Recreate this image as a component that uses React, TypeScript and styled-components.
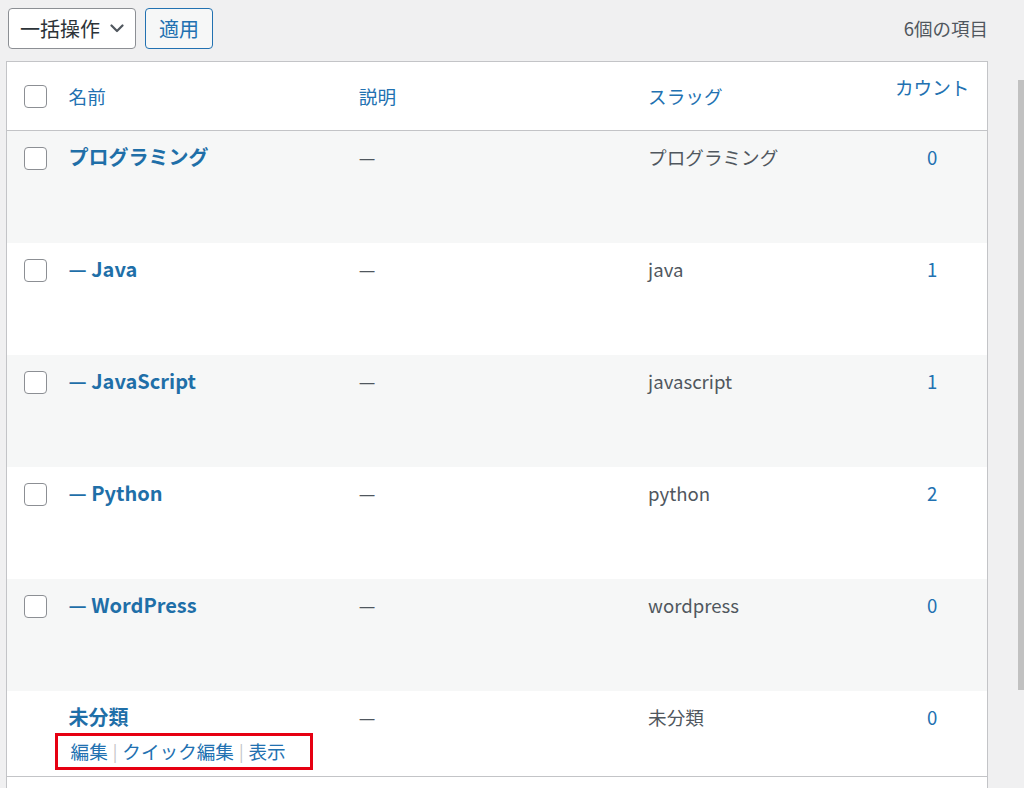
import React from 'react';
import styled, { createGlobalStyle } from 'styled-components';

const GlobalStyle = createGlobalStyle`
  html, body {
    margin: 0;
    padding: 0;
    background: #f0f0f1;
    overflow: hidden;
  }
  body {
    font-family: "Noto Sans CJK JP", "Open Sans", sans-serif;
    color: #3c434a;
  }
`;

const Page = styled.div`
  width: 1024px;
  height: 788px;
  overflow: hidden;
  box-sizing: border-box;
  padding: 8px 36px 0 6px;
`;

const TopNav = styled.div`
  display: flex;
  align-items: center;
  height: 41px;
  padding-left: 2px;
  margin-bottom: 12px;
`;

const BulkSelect = styled.div`
  box-sizing: border-box;
  width: 128px;
  height: 41px;
  border: 1px solid #8c8f94;
  border-radius: 4px;
  background: #fff;
  display: flex;
  align-items: center;
  justify-content: space-between;
  padding: 0 11px 0 11px;
  font-size: 20px;
  line-height: 1;
  color: #2c3338;
`;

const ApplyButton = styled.button`
  box-sizing: border-box;
  margin-left: 9px;
  width: 68px;
  height: 41px;
  border: 1px solid #2271b1;
  border-radius: 4px;
  background: #f6f7f7;
  color: #2271b1;
  font-family: inherit;
  font-size: 20px;
  line-height: 1;
  padding: 0;
`;

const ItemCount = styled.div`
  margin-left: auto;
  font-size: 18.5px;
  color: #50575e;
  padding-bottom: 2px;
`;

const Table = styled.table`
  width: 982px;
  border-collapse: collapse;
  table-layout: fixed;
  border: 1px solid #c3c4c7;
  background: #fff;
  font-size: 18.6px;
`;

const HeadRow = styled.tr`
  height: 69px;
`;

const HeadCell = styled.th<{ $align?: 'left' | 'center'; $raise?: boolean }>`
  padding: 0 12px ${p => (p.$raise ? '18px' : '0')};
  text-align: ${p => p.$align || 'left'};
  vertical-align: middle;
  font-weight: 400;
  color: #2271b1;
  line-height: 28px;
  border-bottom: 1px solid #c3c4c7;
`;

const CheckHead = styled.th`
  padding: 0 0 0 17px;
  vertical-align: middle;
  border-bottom: 1px solid #c3c4c7;
`;

const Row = styled.tr<{ $striped: boolean; $tall: boolean }>`
  background: ${p => (p.$striped ? '#f6f7f7' : '#fff')};
  height: ${p => (p.$tall ? '112px' : '86px')};
`;

const Cell = styled.td<{ $align?: 'left' | 'center'; $muted?: boolean }>`
  padding: 12px 12px 0;
  vertical-align: top;
  text-align: ${p => p.$align || 'left'};
  color: ${p => (p.$muted ? '#50575e' : '#2271b1')};
  line-height: 28px;
`;

const CheckCell = styled.td`
  padding: 16px 0 0 17px;
  vertical-align: top;
`;

const Checkbox = styled.span`
  display: block;
  box-sizing: border-box;
  width: 23px;
  height: 23px;
  border: 1px solid #8c8f94;
  border-radius: 4px;
  background: #fff;
`;

const TitleLine = styled.div`
  height: 28px;
  line-height: 28px;
`;

const RowTitle = styled.a`
  font-size: 20px;
  font-weight: 700;
  color: #1f6fa8;
  text-decoration: none;
`;

const RowActions = styled.div`
  box-sizing: border-box;
  width: 258px;
  height: 37px;
  margin: 2px 0 0 -14px;
  border: 3px solid #e60012;
  padding: 0 0 0 13px;
  display: flex;
  align-items: center;
  white-space: nowrap;
`;

const ActionLink = styled.a`
  color: #2271b1;
  text-decoration: none;
`;

const Sep = styled.span`
  color: #c3c4c7;
  margin: 0 5px;
  font-size: 17px;
`;

const FootRow = styled.tr`
  height: 40px;
  td {
    border-top: 1px solid #c3c4c7;
  }
`;

const ScrollThumb = styled.div`
  position: fixed;
  top: 80px;
  right: 0;
  width: 6px;
  height: 610px;
  background: #c1c1c1;
`;

const Chevron = () => (
  <svg width="14" height="9" viewBox="0 0 14 9" fill="none">
    <path d="M1.5 1.5 L7 7 L12.5 1.5" stroke="#50575e" strokeWidth="2.2" strokeLinecap="round" strokeLinejoin="round" />
  </svg>
);

const terms = [
  { name: 'プログラミング', slug: 'プログラミング', count: '0' },
  { name: '— Java', slug: 'java', count: '1' },
  { name: '— JavaScript', slug: 'javascript', count: '1' },
  { name: '— Python', slug: 'python', count: '2' },
  { name: '— WordPress', slug: 'wordpress', count: '0' },
];

const App: React.FC = () => {
  return (
    <Page>
      <GlobalStyle />
      <TopNav>
        <BulkSelect>
          <span>一括操作</span>
          <Chevron />
        </BulkSelect>
        <ApplyButton>適用</ApplyButton>
        <ItemCount>6個の項目</ItemCount>
      </TopNav>

      <Table>
        <colgroup>
          <col style={{ width: 50 }} />
          <col style={{ width: 290 }} />
          <col style={{ width: 289 }} />
          <col style={{ width: 241 }} />
          <col style={{ width: 110 }} />
        </colgroup>
        <thead>
          <HeadRow>
            <CheckHead>
              <Checkbox />
            </CheckHead>
            <HeadCell>名前</HeadCell>
            <HeadCell>説明</HeadCell>
            <HeadCell>スラッグ</HeadCell>
            <HeadCell $align="center" $raise>カウント</HeadCell>
          </HeadRow>
        </thead>
        <tbody>
          {terms.map((t, i) => (
            <Row key={t.slug} $striped={i % 2 === 0} $tall>
              <CheckCell>
                <Checkbox />
              </CheckCell>
              <Cell>
                <TitleLine>
                  <RowTitle>{t.name}</RowTitle>
                </TitleLine>
              </Cell>
              <Cell $muted>—</Cell>
              <Cell $muted>{t.slug}</Cell>
              <Cell $align="center">{t.count}</Cell>
            </Row>
          ))}
          <Row $striped={false} $tall={false}>
            <CheckCell />
            <Cell>
              <TitleLine>
                <RowTitle>未分類</RowTitle>
              </TitleLine>
              <RowActions>
                <ActionLink>編集</ActionLink>
                <Sep>|</Sep>
                <ActionLink>クイック編集</ActionLink>
                <Sep>|</Sep>
                <ActionLink>表示</ActionLink>
              </RowActions>
            </Cell>
            <Cell $muted>—</Cell>
            <Cell $muted>未分類</Cell>
            <Cell $align="center">0</Cell>
          </Row>
        </tbody>
        <tfoot>
          <FootRow>
            <td />
            <td />
            <td />
            <td />
            <td />
          </FootRow>
        </tfoot>
      </Table>
      <ScrollThumb />
    </Page>
  );
};

export default App;
